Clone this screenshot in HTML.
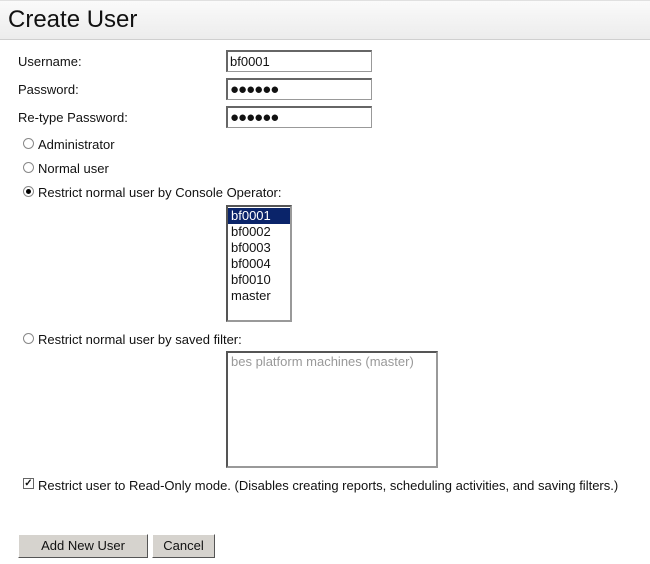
<!DOCTYPE html>
<html><head><style>
body{margin:0;width:650px;height:564px;background:#fff;font-family:"Liberation Sans",Arial,sans-serif;font-size:13px;color:#111;position:relative;overflow:hidden}
.a{position:absolute;white-space:nowrap}
.hdr{position:absolute;left:0;top:0;width:650px;height:38px;background:linear-gradient(#fafafa,#ececec);border-bottom:1px solid #cfcfcf;border-top:1px solid #e0e0e0}
.hdr span{position:absolute;left:8px;top:5px;font-size:24px;color:#111}
.inp{position:absolute;left:226px;width:141px;height:19px;border:1px solid #999;border-top:2px solid #666;border-left:2px solid #666;background:#fff;font-size:13px;line-height:19px;padding-left:2px;box-sizing:content-box}
.dots{font-size:15px;letter-spacing:-1px;font-weight:bold}
.radio{position:absolute;left:23px;width:9px;height:9px;border-radius:50%;border:1px solid #888;background:#fff}
.radio.on:after{content:"";position:absolute;left:2px;top:2px;width:5px;height:5px;border-radius:50%;background:#000}
.list{position:absolute;border:2px solid #999;border-top-color:#555;border-left-color:#555;background:#fff;box-sizing:border-box}
.list div{height:16px;line-height:16px;padding-left:3px;font-size:13px}
.btn{position:absolute;top:534px;height:24px;background:#d6d3ce;border:1px solid #fff;border-right-color:#555;border-bottom-color:#555;box-sizing:border-box;text-align:center;line-height:22px;font-size:13px}
</style></head><body>
<div class="hdr"><span>Create User</span></div>
<div class="a" style="left:18px;top:54px">Username:</div>
<div class="a" style="left:18px;top:82px">Password:</div>
<div class="a" style="left:18px;top:110px">Re-type Password:</div>
<div class="inp" style="top:50px">bf0001</div>
<div class="inp dots" style="top:78px">●●●●●●</div>
<div class="inp dots" style="top:106px">●●●●●●</div>
<div class="radio" style="top:138px"></div><div class="a" style="left:38px;top:137px">Administrator</div>
<div class="radio" style="top:162px"></div><div class="a" style="left:38px;top:161px">Normal user</div>
<div class="radio on" style="top:186px"></div><div class="a" style="left:38px;top:185px">Restrict normal user by Console Operator:</div>
<div class="list" style="left:226px;top:205px;width:66px;height:117px">
<div style="background:#0a246a;color:#fff;margin-top:1px">bf0001</div><div>bf0002</div><div>bf0003</div><div>bf0004</div><div>bf0010</div><div>master</div></div>
<div class="radio" style="top:333px"></div><div class="a" style="left:38px;top:332px">Restrict normal user by saved filter:</div>
<div class="list" style="left:226px;top:351px;width:212px;height:117px;color:#999"><div style="margin-top:1px">bes platform machines (master)</div></div>
<div class="a" style="left:23px;top:478px;width:9px;height:9px;border:1px solid #666;background:#fff;font-size:10px;line-height:9px;text-align:center;font-weight:bold">✓</div>
<div class="a" style="left:38px;top:478px">Restrict user to Read-Only mode. (Disables creating reports, scheduling activities, and saving filters.)</div>
<div class="btn" style="left:18px;width:130px">Add New User</div>
<div class="btn" style="left:152px;width:63px">Cancel</div>
</body></html>
